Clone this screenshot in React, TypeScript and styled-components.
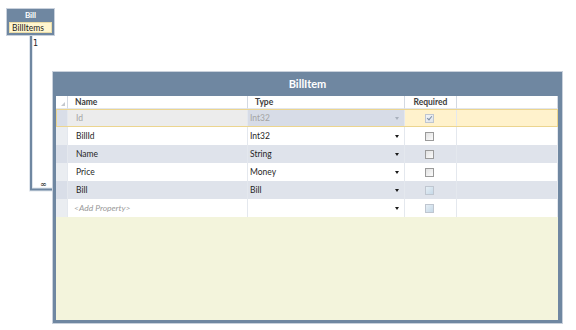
import styled, { createGlobalStyle, css } from "styled-components";

const GlobalStyle = createGlobalStyle`
  html, body {
    margin: 0;
    padding: 0;
    background: #ffffff;
  }
  body {
    font-family: Lato, "Open Sans", "Liberation Sans", sans-serif;
  }
`;

const BLUE = "#6f87a1";

const Canvas = styled.div`
  position: relative;
  width: 576px;
  height: 330px;
  overflow: hidden;
  background: #ffffff;
`;

// entity shapes sit on a free diagram canvas
const Entity = styled.div<{ $x: number; $y: number; $w: number; $h?: number }>`
  position: absolute;
  left: ${(p) => p.$x}px;
  top: ${(p) => p.$y}px;
  width: ${(p) => p.$w}px;
  ${(p) => p.$h && `height: ${p.$h}px;`}
  box-sizing: border-box;
  border: 1px solid #c9d1dc;
  background: ${BLUE};
  display: flex;
  flex-direction: column;
`;

const SmallTitle = styled.div`
  height: 13px;
  line-height: 13px;
  text-align: center;
  color: #ffffff;
  font-weight: 700;
  font-size: 8px;
`;

const SmallItem = styled.div`
  margin: 0 2px 2px 2px;
  height: 11px;
  line-height: 11px;
  padding-left: 2px;
  box-sizing: border-box;
  background: #fff6cf;
  border: 1px solid #eadca8;
  font-size: 8.5px;
  color: #1c1c1c;
`;

const Title = styled.div`
  height: 24px;
  line-height: 24px;
  text-align: center;
  color: #ffffff;
  font-weight: 700;
  font-size: 11px;
`;

const Body = styled.div`
  flex: 1;
  margin: 0 4px 3px 3px;
  background: #f3f4dc;
`;

const COLS = "12px 180px 157px 52px 1fr";

const HeaderRow = styled.div`
  display: grid;
  grid-template-columns: ${COLS};
  height: 13px;
  background: #ffffff;
`;

const HeaderCell = styled.div<{ $center?: boolean }>`
  position: relative;
  box-sizing: border-box;
  border-right: 1px solid #d3d9e2;
  border-bottom: 1px solid #e2e6ec;
  font-size: 8.5px;
  font-weight: 700;
  color: #3d3d3d;
  line-height: 12px;
  padding-left: ${(p) => (p.$center ? 0 : 7)}px;
  text-align: ${(p) => (p.$center ? "center" : "left")};
`;

const Corner = styled.span`
  position: absolute;
  right: 2px;
  bottom: 2px;
  width: 0;
  height: 0;
  border-left: 4px solid transparent;
  border-bottom: 4px solid #c4c8ce;
`;

const Row = styled.div<{ $alt?: boolean; $selected?: boolean }>`
  display: grid;
  grid-template-columns: ${COLS};
  height: 18px;
  background: ${(p) => (p.$alt ? "#dfe3eb" : "#ffffff")};
  ${(p) =>
    p.$selected &&
    css`
      outline: 1px solid #ecd58f;
      outline-offset: -1px;
    `}
`;

type CellKind = "rowhead" | "disabled" | "typeDisabled" | "yellow" | "plain";

const cellBg = (kind: CellKind, alt?: boolean) => {
  switch (kind) {
    case "rowhead":
      return alt ? "#d9dee8" : "#eaedf1";
    case "disabled":
      return "#ececec";
    case "typeDisabled":
      return "#d7dce7";
    case "yellow":
      return "#fff2cc";
    default:
      return "transparent";
  }
};

const Cell = styled.div<{ $kind?: CellKind; $alt?: boolean; $pad?: number; $center?: boolean }>`
  box-sizing: border-box;
  display: flex;
  align-items: center;
  justify-content: ${(p) => (p.$center ? "center" : "space-between")};
  padding: 0 5px 0 ${(p) => p.$pad ?? 2}px;
  background: ${(p) => cellBg(p.$kind ?? "plain", p.$alt)};
  border-right: 1px solid #e4e8ee;
  font-size: 8.5px;
  color: #1f1f1f;
  white-space: nowrap;
`;

const CellText = styled.span<{ $muted?: boolean; $italic?: boolean }>`
  color: ${(p) => (p.$muted ? "#a4a4a4" : "#1f1f1f")};
  ${(p) =>
    p.$italic &&
    css`
      font-style: italic;
      color: #9a9a9a;
    `}
`;

const Arrow = styled.span<{ $muted?: boolean }>`
  width: 0;
  height: 0;
  border-left: 2.5px solid transparent;
  border-right: 2.5px solid transparent;
  border-top: 3px solid ${(p) => (p.$muted ? "#a9b0bc" : "#1a1a1a")};
`;

type BoxState = "checked" | "empty" | "blue";

const Box = styled.span<{ $state: BoxState }>`
  position: relative;
  width: 9px;
  height: 9px;
  box-sizing: border-box;
  border: 1px solid ${(p) => (p.$state === "empty" ? "#9a9a9a" : "#bfc6d0")};
  background: ${(p) =>
    p.$state === "blue"
      ? "linear-gradient(135deg, #e6eef5, #c6d9e8)"
      : p.$state === "checked"
      ? "linear-gradient(135deg, #f2f4f7, #dfe4ea)"
      : "linear-gradient(135deg, #e2e2e2, #fbfbfb)"};
`;

const Check = styled.span`
  position: absolute;
  left: 2px;
  top: 0px;
  width: 2px;
  height: 4px;
  border-right: 1px solid #7e8ea4;
  border-bottom: 1px solid #7e8ea4;
  transform: rotate(40deg);
`;

const Link = styled.svg`
  position: absolute;
  left: 0;
  top: 0;
`;

const EndLabel = styled.span<{ $x: number; $y: number }>`
  position: absolute;
  left: ${(p) => p.$x}px;
  top: ${(p) => p.$y}px;
  font-size: 8px;
  line-height: 8px;
  color: #222;
  font-family: "DejaVu Sans", sans-serif;
`;

type Prop = {
  name: string;
  type: string;
  state: BoxState;
  key?: boolean;
  placeholder?: boolean;
};

const props: Prop[] = [
  { name: "Id", type: "Int32", state: "checked", key: true },
  { name: "BillId", type: "Int32", state: "empty" },
  { name: "Name", type: "String", state: "empty" },
  { name: "Price", type: "Money", state: "empty" },
  { name: "Bill", type: "Bill", state: "blue" },
  { name: "<Add Property>", type: "", state: "blue", placeholder: true },
];

const App = () => {
  return (
    <>
      <GlobalStyle />
      <Canvas>
        <Link width={576} height={330}>
          <polyline
            points="31,36 31,189.5 53,189.5"
            fill="none"
            stroke="#dfe5ec"
            strokeWidth={4}
          />
          <polyline
            points="31,36 31,189.5 53,189.5"
            fill="none"
            stroke={BLUE}
            strokeWidth={2}
          />
        </Link>
        <EndLabel $x={33} $y={40}>1</EndLabel>
        <EndLabel $x={40} $y={181}>∞</EndLabel>

        <Entity $x={6} $y={8} $w={49}>
          <SmallTitle>Bill</SmallTitle>
          <SmallItem>BillItems</SmallItem>
        </Entity>

        <Entity $x={52} $y={71} $w={511} $h={253}>
          <Title>BillItem</Title>
          <Body>
            <HeaderRow>
              <HeaderCell>
                <Corner />
              </HeaderCell>
              <HeaderCell>Name</HeaderCell>
              <HeaderCell>Type</HeaderCell>
              <HeaderCell $center>Required</HeaderCell>
              <HeaderCell />
            </HeaderRow>
            {props.map((p, i) => {
              const alt = i % 2 === 0 && !p.key;
              return (
                <Row key={p.name} $alt={alt} $selected={p.key}>
                  <Cell $kind="rowhead" $alt={alt || p.key} />
                  <Cell $kind={p.key ? "disabled" : "plain"} $pad={p.placeholder ? 6 : 8}>
                    <CellText $muted={p.key} $italic={p.placeholder}>
                      {p.name}
                    </CellText>
                  </Cell>
                  <Cell $kind={p.key ? "typeDisabled" : "plain"}>
                    <CellText $muted={p.key}>{p.type}</CellText>
                    <Arrow $muted={p.key} />
                  </Cell>
                  <Cell $kind={p.key ? "yellow" : "plain"} $center>
                    <Box $state={p.state}>{p.state === "checked" && <Check />}</Box>
                  </Cell>
                  <Cell $kind={p.key ? "yellow" : "plain"} />
                </Row>
              );
            })}
          </Body>
        </Entity>
      </Canvas>
    </>
  );
};

export default App;
